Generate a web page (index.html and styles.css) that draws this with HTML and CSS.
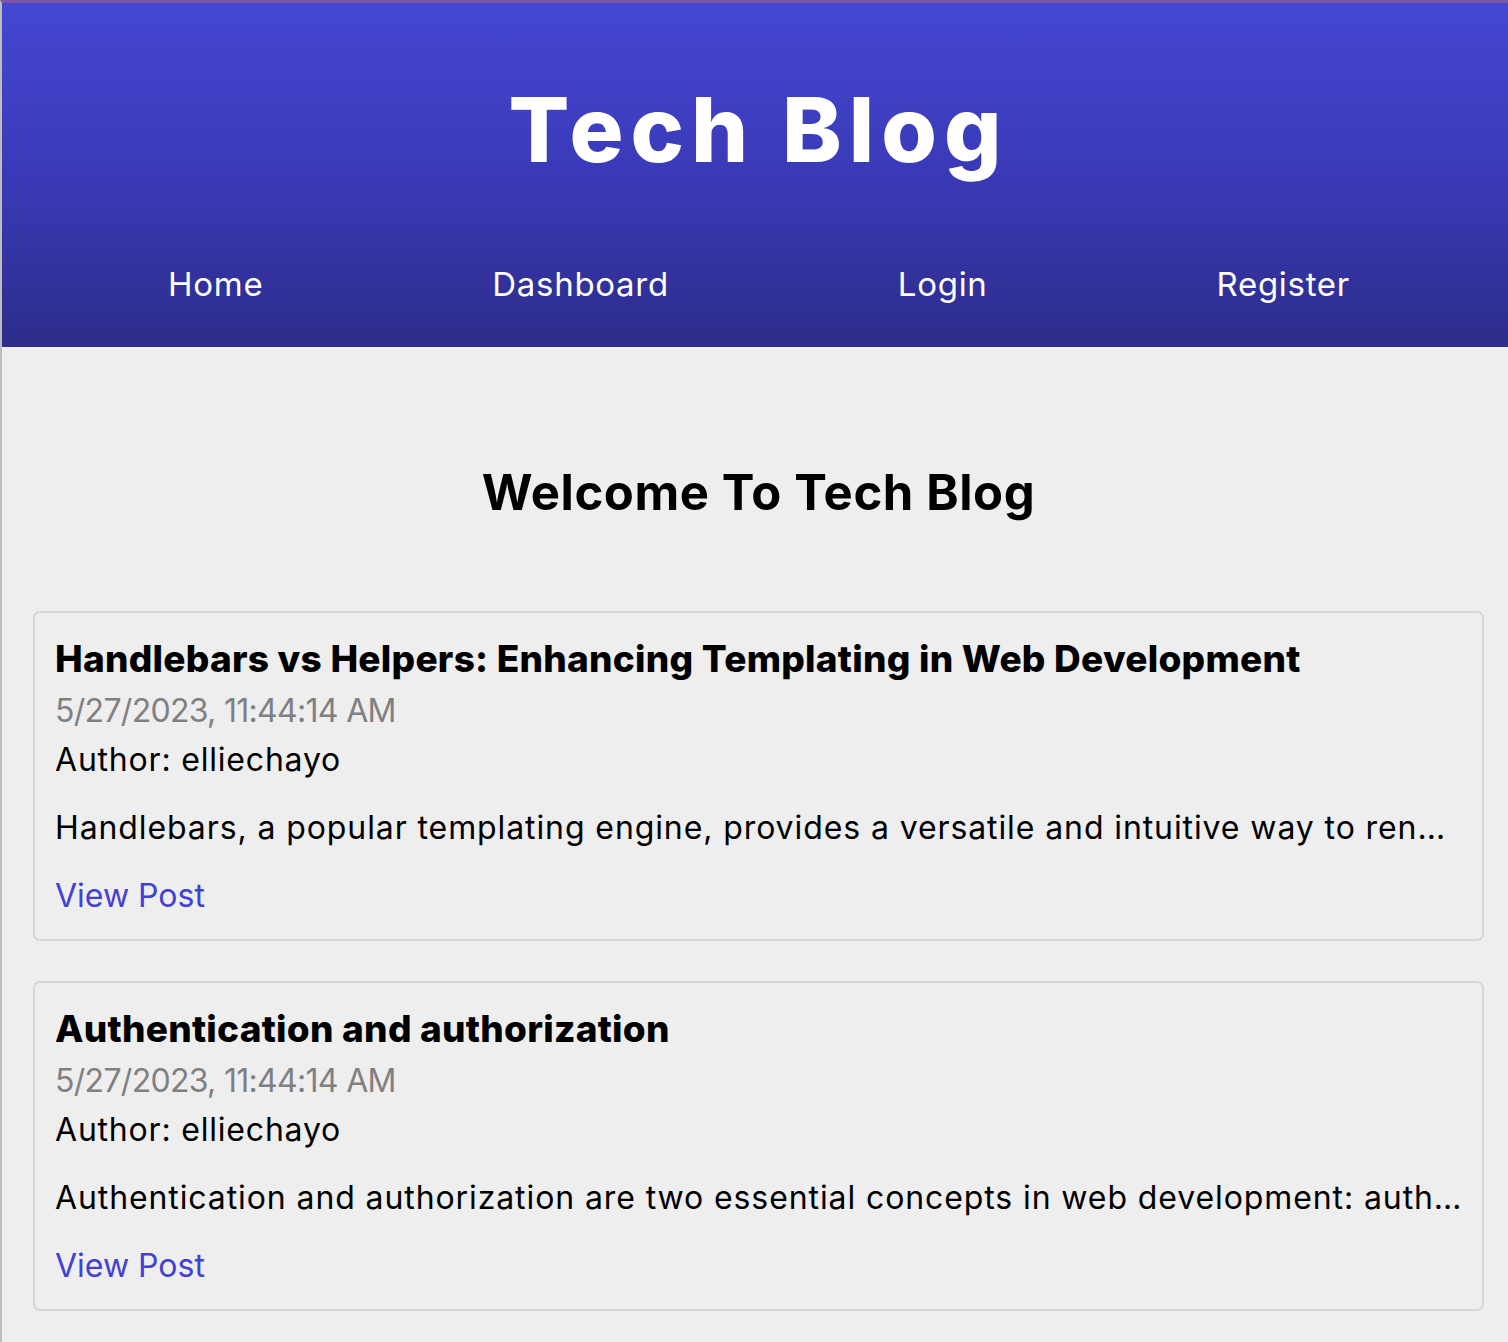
FILE: index.html
```html
<!DOCTYPE html>
<html lang="en">
<head>
<meta charset="utf-8">
<title>Tech Blog</title>
<link rel="stylesheet" href="styles.css">
</head>
<body>
<header class="site-header">
  <h1 class="site-title">Tech Blog</h1>
  <nav class="site-nav">
    <a href="#">Home</a>
    <a href="#">Dashboard</a>
    <a href="#">Login</a>
    <a href="#">Register</a>
  </nav>
</header>
<main class="content">
  <h2 class="welcome">Welcome To Tech Blog</h2>
  <article class="post">
    <h3 class="post-title">Handlebars vs Helpers: Enhancing Templating in Web Development</h3>
    <p class="post-date">5/27/2023, 11:44:14 AM</p>
    <p class="post-author">Author: elliechayo</p>
    <p class="post-excerpt">Handlebars, a popular templating engine, provides a versatile and intuitive way to render dynamic content in web applications by combining templates with data.</p>
    <a class="post-link" href="#">View Post</a>
  </article>
  <article class="post">
    <h3 class="post-title">Authentication and authorization</h3>
    <p class="post-date">5/27/2023, 11:44:14 AM</p>
    <p class="post-author">Author: elliechayo</p>
    <p class="post-excerpt">Authentication and authorization are two essential concepts in web development: authentication verifies who a user is, while authorization determines what they can access.</p>
    <a class="post-link" href="#">View Post</a>
  </article>
</main>
</body>
</html>
```
FILE: styles.css
```css
html, body {
  margin: 0;
  padding: 0;
}
body {
  background: #eeeeee;
  border-top: 3px solid #7b55a6;
  border-left: 2px solid #bdbdbd;
  font-family: "Inter", "Noto Sans", sans-serif;
  color: #000;
  min-height: 1339px;
  box-sizing: border-box;
}
.site-header {
  background: linear-gradient(180deg, #4447d2 0%, #3a3ab8 50%, #2d2c8a 100%);
  padding: 72px 0 43px;
  text-align: center;
}
.site-title {
  margin: 0;
  padding-left: 7px;
  color: #fff;
  font-family: "Inter", sans-serif;
  font-weight: 800;
  font-size: 90px;
  line-height: 110px;
  letter-spacing: 7px;
}
.site-nav {
  margin-top: 79px;
  padding-left: 8px;
  display: flex;
  justify-content: center;
  gap: 229px;
  height: 40px;
  align-items: center;
}
.site-nav a {
  color: #fff;
  text-decoration: none;
  font-size: 33px;
  line-height: 40px;
  letter-spacing: 0.7px;
}
.content {
  padding: 116px 24px 30px 31px;
}
.welcome {
  margin: 0 0 88px;
  text-align: center;
  font-size: 49px;
  line-height: 60px;
  font-weight: 700;
  letter-spacing: 0.6px;
}
.post {
  border: 2px solid #d6d6d6;
  border-radius: 7px;
  padding: 22px 20px 18px 20px;
  margin-bottom: 40px;
}
.post-title {
  margin: 0;
  font-size: 37px;
  line-height: 48px;
  font-weight: 800;
  letter-spacing: 0.25px;
}
.post-date {
  margin: 3px 0 0;
  color: #808080;
  font-size: 32px;
  line-height: 50px;
  letter-spacing: -0.7px;
}
.post-author {
  margin: 0;
  font-size: 32px;
  line-height: 48px;
  letter-spacing: 0.8px;
}
.post-excerpt {
  margin: 19px 0 0;
  font-size: 32px;
  line-height: 50px;
  letter-spacing: 0.9px;
  white-space: nowrap;
  overflow: hidden;
  text-overflow: ellipsis;
}
.post-link {
  display: block;
  margin-top: 18px;
  color: #4340d6;
  text-decoration: none;
  font-size: 32px;
  line-height: 50px;
}
```
